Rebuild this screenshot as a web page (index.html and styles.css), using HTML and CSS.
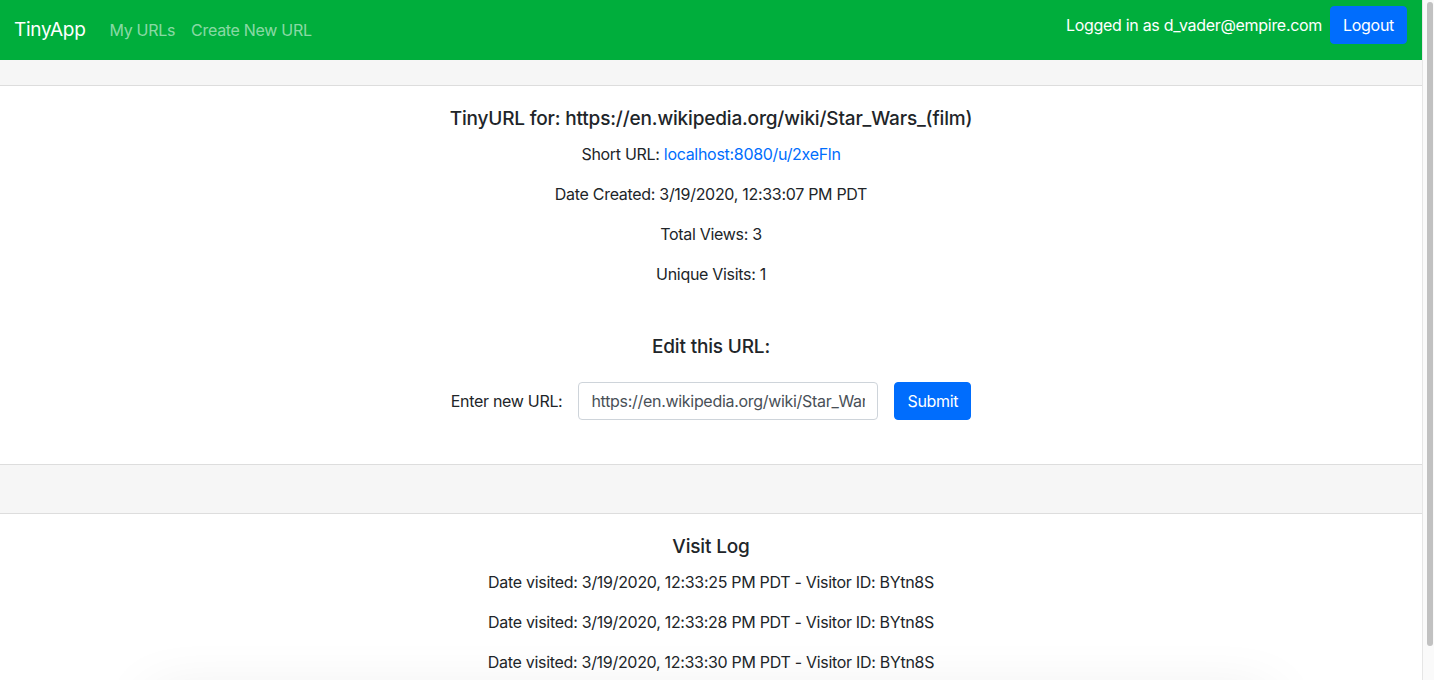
FILE: index.html
```html
<!DOCTYPE html>
<html lang="en">
<head>
<meta charset="utf-8">
<title>TinyApp</title>
<link rel="stylesheet" href="styles.css">
</head>
<body>
<nav class="navbar">
  <div class="nav-left">
    <a class="brand" href="#">TinyApp</a>
    <a class="nav-link" href="#">My URLs</a>
    <a class="nav-link" href="#">Create New URL</a>
  </div>
  <div class="nav-right">
    <span class="user">Logged in as d_vader@empire.com</span>
    <button class="btn">Logout</button>
  </div>
</nav>
<div class="band band-top"></div>
<section class="main">
  <h5 class="title">TinyURL for: https://en.wikipedia.org/wiki/Star_Wars_(film)</h5>
  <p>Short URL: <a class="link" href="#">localhost:8080/u/2xeFln</a></p>
  <p>Date Created: 3/19/2020, 12:33:07 PM PDT</p>
  <p>Total Views: 3</p>
  <p>Unique Visits: 1</p>
  <h5 class="title edit-title">Edit this URL:</h5>
  <form class="edit-form">
    <label class="label" for="url">Enter new URL:</label>
    <input class="input" id="url" type="text" value="https://en.wikipedia.org/wiki/Star_Wars_(film)">
    <button class="btn" type="button">Submit</button>
  </form>
</section>
<div class="band band-mid"></div>
<section class="log">
  <h5 class="title">Visit Log</h5>
  <p>Date visited: 3/19/2020, 12:33:25 PM PDT - Visitor ID: BYtn8S</p>
  <p>Date visited: 3/19/2020, 12:33:28 PM PDT - Visitor ID: BYtn8S</p>
  <p>Date visited: 3/19/2020, 12:33:30 PM PDT - Visitor ID: BYtn8S</p>
</section>
<div class="shadow-card"></div>
<div class="scrollbar"><div class="scroll-thumb"></div></div>
</body>
</html>
```
FILE: styles.css
```css
html {
  background: #fff;
}
html::-webkit-scrollbar {
  width: 0;
  height: 0;
}
body {
  margin: 0 12px 0 0;
  font-family: Inter, "Liberation Sans", sans-serif;
  font-size: 16px;
  line-height: 24px;
  letter-spacing: -0.3px;
  color: #212529;
}
.scrollbar {
  position: fixed;
  top: 0;
  right: 0;
  width: 11px;
  height: 100%;
  background: #fafafa;
  border-left: 1px solid #e6e6e6;
}
.scroll-thumb {
  position: absolute;
  top: 2px;
  left: 4px;
  width: 6px;
  height: 644px;
  border-radius: 3px;
  background: #c1c1c1;
}
.navbar {
  height: 60px;
  background: #00ae3c;
  display: flex;
  justify-content: space-between;
  padding: 0 15px 0 14px;
}
.nav-left {
  display: flex;
  align-items: center;
}
.brand {
  color: #fff;
  font-size: 19px;
  text-decoration: none;
  margin-right: 16px;
}
.nav-link {
  color: rgba(255, 255, 255, 0.55);
  text-decoration: none;
  padding: 0 8px;
  font-size: 16px;
}
.nav-right {
  display: flex;
  align-items: center;
  align-self: flex-start;
  margin-top: 6px;
  gap: 8px;
}
.user {
  color: #fff;
}
.btn {
  font-family: inherit;
  font-size: 16px;
  line-height: 24px;
  letter-spacing: -0.3px;
  color: #fff;
  background: #006dfd;
  border: 1px solid #006dfd;
  border-radius: 4px;
  padding: 6px 12px;
}
.band {
  background: #f6f6f6;
}
.band-top {
  height: 25px;
  border-bottom: 1px solid #dddddd;
}
.band-mid {
  height: 48px;
  border-top: 1px solid #dddddd;
  border-bottom: 1px solid #dddddd;
}
.main, .log {
  text-align: center;
  padding-top: 21px;
}
.main {
  padding-bottom: 44px;
}
.title {
  font-size: 19px;
  font-weight: 500;
  line-height: 24px;
  letter-spacing: -0.17px;
  margin: 0 0 11px;
}
p {
  margin: 0 0 16px;
}
.link {
  color: #006dfd;
  text-decoration: none;
}
.edit-title {
  margin-top: 49px;
  margin-bottom: 23px;
}
.edit-form {
  display: flex;
  justify-content: center;
  align-items: center;
  gap: 16px;
}
.input {
  width: 300px;
  height: 38px;
  box-sizing: border-box;
  border: 1px solid #ced4da;
  border-radius: 4px;
  padding: 6px 12px;
  font-family: inherit;
  font-size: 16px;
  letter-spacing: -0.3px;
  color: #495057;
}
.shadow-card {
  margin: 26px 150px 0;
  height: 24px;
  background: #fff;
  box-shadow: 0 0 60px rgba(0, 0, 0, 0.14);
}
```
